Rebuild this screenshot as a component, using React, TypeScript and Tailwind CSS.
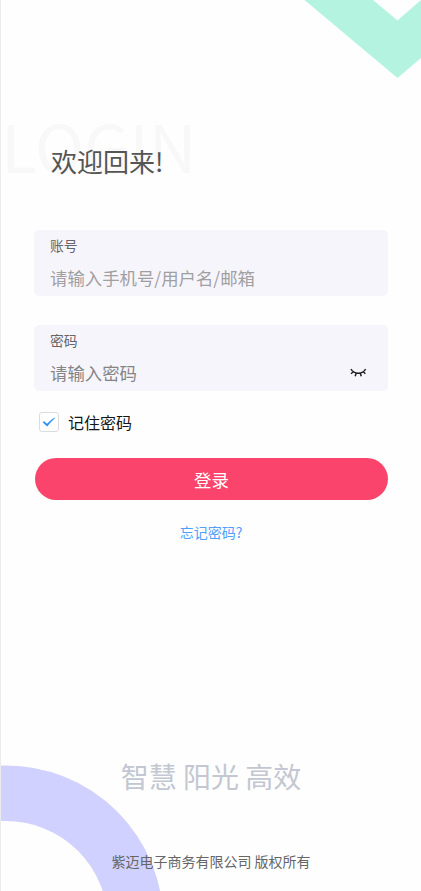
import React, { useState } from 'react'

interface FieldProps {
  label: string
  placeholder: string
  type?: string
  tone: string
  children?: React.ReactNode
}

function Field({ label, placeholder, type = 'text', tone, children }: FieldProps) {
  return (
    <div className="flex h-[66px] flex-col rounded-[5px] bg-[#f7f5fc] pl-[16px] pr-[21px]">
      <label className="mt-[5px] text-[13.8px] leading-5 text-[#666]">{label}</label>
      <div className="mt-[10px] flex h-[26px] items-center">
        <input
          type={type}
          placeholder={placeholder}
          className={`h-[26px] min-w-0 flex-1 bg-transparent text-[17.4px] outline-none ${tone}`}
        />
        {children}
      </div>
    </div>
  )
}

function ClosedEye() {
  return (
    <svg width="18" height="12" viewBox="0 0 18 12" fill="none" stroke="#222" strokeWidth="1.5">
      <path d="M2 2Q4.2 6.2 9.3 6.2T16.6 2M4.3 4.7L2 6.7M7.2 6L6.2 9.2M11.4 6L12.2 9.2M14.2 4.7L16.4 6.7" />
    </svg>
  )
}

export default function App() {
  const [remember, setRemember] = useState(true)

  return (
    <div className="relative flex h-[891px] w-full flex-col overflow-hidden border-l border-[#ececec] bg-[#fefefe] pl-[33px] pr-[33px] font-['Noto_Sans_CJK_SC',sans-serif]">
      {/* Background decoration */}
      <svg className="absolute -left-px top-0" width="421" height="891" viewBox="0 0 421 891">
        <path d="M304.5 0H373L397.5 20.5L421 0V58L397.5 78Z" fill="#b4f3e0" />
        <circle cx="6" cy="922.7" r="129.5" fill="none" stroke="#d0d1fe" strokeWidth="55.6" />
      </svg>
      <span className="absolute left-0 top-[96px] text-[66px] leading-[96px] text-[#f8f8f8]">LOGIN</span>

      <h1 className="relative ml-[17px] mt-[142px] text-[26px] leading-[38px] text-[#555]">欢迎回来!</h1>

      <form className="relative mt-[50px] flex flex-col" onSubmit={e => e.preventDefault()}>
        <div className="flex flex-col gap-[29px]">
          <Field label="账号" placeholder="请输入手机号/用户名/邮箱" tone="placeholder:text-[#a0a0a0]" />
          <Field label="密码" placeholder="请输入密码" type="password" tone="placeholder:text-[#858585]">
            <button type="button">
              <ClosedEye />
            </button>
          </Field>
        </div>

        <label className="ml-[5px] mt-[19px] flex h-6 items-center gap-[9px] text-[16px] text-[#151515]">
          <input
            type="checkbox"
            className="peer sr-only"
            checked={remember}
            onChange={e => setRemember(e.target.checked)}
          />
          <span className="flex h-5 w-5 items-center justify-center rounded-[3px] border border-[#dcdcdc] bg-white">
            {remember && (
              <svg width="14" height="12" viewBox="0 0 14 12" fill="#2490f8">
                <path d="M.6 6.3L2 5.2L5 7.7Q8.5 4 12.4 1.4L12.8 2.3Q9 5.7 5.2 10.6Z" />
              </svg>
            )}
          </span>
          记住密码
        </label>

        <button
          type="submit"
          className="ml-px mt-[24px] h-[42px] rounded-full bg-[#fb446c] text-[17.4px] leading-[44px] text-white"
        >
          登录
        </button>
        <a className="mt-[22px] text-center text-[14px] leading-[21px] text-[#4ea0fb]">忘记密码?</a>
      </form>

      <footer className="relative mt-auto flex flex-col items-center">
        <p className="text-[28px] leading-[40px] text-[#c2c7d1]">智慧 阳光 高效</p>
        <p className="mb-[20px] mt-[55px] text-[14px] leading-5 text-[#666]">紫迈电子商务有限公司 版权所有</p>
      </footer>
    </div>
  )
}
